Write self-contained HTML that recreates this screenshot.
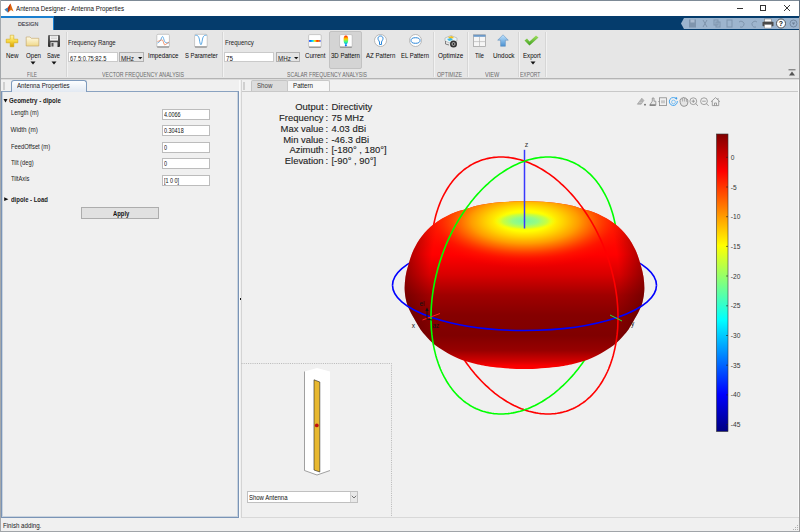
<!DOCTYPE html>
<html><head><meta charset="utf-8">
<style>
*{margin:0;padding:0;box-sizing:border-box}
html,body{width:800px;height:532px;overflow:hidden;background:#f0f0f0;font-family:"Liberation Sans",sans-serif;position:relative}
.a{position:absolute}
.t{position:absolute;white-space:nowrap;color:#000;line-height:1}
.lb{position:absolute;white-space:nowrap;color:#2b2b2b;font-size:6px;line-height:1}
.sec{position:absolute;white-space:nowrap;color:#7a7a7a;font-size:5.3px;line-height:1}
.sep{position:absolute;top:32px;width:1px;height:45px;background:#d6d6d6;box-shadow:1px 0 0 #f2f2f2}
.fld{position:absolute;background:#fff;border:1px solid #bcbcbc;font-size:5.6px;line-height:9px;padding-left:1px;color:#111;white-space:nowrap}
.plab{position:absolute;font-size:5.7px;color:#222;white-space:nowrap;line-height:1}
.ico{position:absolute;background:#fff;border:1px solid #9a9a9a;border-radius:1px}
.st{position:absolute;font-size:9.4px;color:#222;white-space:nowrap;line-height:1}
.cb{position:absolute;font-size:6.3px;color:#333;white-space:nowrap;line-height:1}
</style></head><body>
<!-- ===== title bar ===== -->
<div class="a" style="left:0;top:0;width:800px;height:16px;background:#fff;border-top:1px solid #7d8a96"></div>
<svg class="a" style="left:4px;top:3px" width="10" height="10" viewBox="0 0 10 10">
 <path d="M0.5,6.5 L4,4.5 L6.5,0.5 L9.5,8.5 L7,7 L4,9.5 Z" fill="#e06a10"/>
 <path d="M0.5,6.5 L4,4.5 L5,6.5 L4,9.5 Z" fill="#3a86c8"/>
 <path d="M4,4.5 L6.5,0.5 L6,5 L4,9.5 Z" fill="#b83010"/>
</svg>
<div class="t" style="left:15.75px;top:5.31px;font-size:7.2px;color:#111;transform:scaleX(0.864);transform-origin:0 0;">Antenna Designer - Antenna Properties</div>
<!-- window controls -->
<div class="a" style="left:737px;top:8px;width:6px;height:1px;background:#333"></div>
<div class="a" style="left:760px;top:5px;width:6px;height:6px;border:1px solid #333"></div>
<svg class="a" style="left:783px;top:4px" width="8" height="8" viewBox="0 0 8 8"><path d="M1,1 L7,7 M7,1 L1,7" stroke="#222" stroke-width="0.9"/></svg>
<!-- ===== blue band ===== -->
<div class="a" style="left:0;top:16px;width:800px;height:14px;background:#053c6c"></div>
<div class="a" style="left:1px;top:16px;width:53px;height:14px;background:#e6e6e6;border-top:2px solid #1a7fd0;border-right:1px solid #1a7fd0"></div>
<div class="t" style="left:17.60px;top:21.05px;font-size:6.2px;color:#3a3a48;-webkit-text-stroke:0.15px #3a3a48;transform:scaleX(0.855);transform-origin:0 0;">DESIGN</div>
<!-- quick access -->
<svg class="a" style="left:681px;top:18px" width="119" height="11" viewBox="0 0 119 11">
 <path d="M0,5.5 L3,0 L119,0 L119,11 L3,11 Z" fill="#9db5ce"/>
 <rect x="8" y="1.5" width="7" height="8" fill="#7f95ad"/><rect x="9.5" y="1.5" width="4" height="3" fill="#aabbd0"/>
 <path d="M22,2 L26,9 M26,2 L22,9" stroke="#7f95ad" stroke-width="1"/>
 <rect x="33" y="2" width="4" height="5" fill="none" stroke="#7f95ad"/><rect x="35" y="4" width="4" height="5" fill="none" stroke="#7f95ad"/>
 <rect x="46" y="2" width="5" height="7" fill="none" stroke="#7f95ad"/>
 <path d="M58,4 a3,3 0 1 1 1,5" fill="none" stroke="#7f95ad"/>
 <path d="M76,4 a3,3 0 1 0 -1,5" fill="none" stroke="#7f95ad"/>
 <rect x="83.5" y="1" width="7" height="3" fill="#fafafa" stroke="#666" stroke-width="0.5"/><rect x="81.5" y="3.8" width="11" height="4.5" rx="0.8" fill="#4a4a4a"/><rect x="83.5" y="6.5" width="7" height="3.5" fill="#fff" stroke="#777" stroke-width="0.4"/>
 <circle cx="100" cy="5.5" r="4.5" fill="#fff" stroke="#333" stroke-width="0.8"/>
 <text x="100" y="8" font-size="7" font-weight="bold" text-anchor="middle" fill="#111" font-family="Liberation Sans">?</text>
 <circle cx="112.5" cy="5.5" r="3.5" fill="none" stroke="#6b7f95" stroke-width="0.8"/><path d="M110.8,4.5 L114.2,4.5 L112.5,7 Z" fill="#6b7f95"/>
</svg>
<!-- ===== toolstrip ===== -->
<div class="a" style="left:0;top:30px;width:800px;height:48px;background:#e6e6e6"></div>
<div class="a" style="left:0;top:78px;width:800px;height:1px;background:#b4b4b4"></div>
<div class="a" style="left:0;top:79px;width:800px;height:1px;background:#dcdcdc"></div>
<div class="sep" style="left:66px"></div>
<div class="sep" style="left:222px"></div>
<div class="sep" style="left:433px"></div>
<div class="sep" style="left:467px"></div>
<div class="sep" style="left:518px"></div>
<div class="sep" style="left:545px"></div>
<!-- FILE -->
<svg class="a" style="left:0;top:30px" width="66" height="20" viewBox="0 30 66 20">
 <defs><linearGradient id="gy" x1="0" y1="0" x2="0" y2="1"><stop offset="0" stop-color="#fff6b0"/><stop offset="0.5" stop-color="#f8d840"/><stop offset="1" stop-color="#d8a000"/></linearGradient>
 <linearGradient id="gf" x1="0" y1="0" x2="0" y2="1"><stop offset="0" stop-color="#fffbe8"/><stop offset="1" stop-color="#f0d888"/></linearGradient>
 <linearGradient id="gd" x1="0" y1="0" x2="0" y2="1"><stop offset="0" stop-color="#6a6a6a"/><stop offset="1" stop-color="#2a2a2a"/></linearGradient></defs>
 <path d="M10.2,35.2 H13.8 V39.2 H17.8 V42.8 H13.8 V46.8 H10.2 V42.8 H6.2 V39.2 H10.2 Z" fill="url(#gy)" stroke="#d0a000" stroke-width="0.5"/>
 <path d="M26.2,37 H30 L31.3,38.3 H38.8 V46 H26.2 Z" fill="url(#gf)" stroke="#c0a060" stroke-width="0.6"/>
 <rect x="48" y="35" width="12" height="12" rx="1" fill="url(#gd)"/>
 <rect x="50" y="35.6" width="8" height="5" fill="#f4f4f4"/><path d="M51,37 H57 M51,38.5 H57" stroke="#bbb" stroke-width="0.5"/>
 <rect x="50.5" y="42.2" width="7" height="4.8" fill="#e0e0e0"/><rect x="51.5" y="43" width="2" height="3.5" fill="#555"/>
</svg>
<div class="t" style="left:6.00px;top:52.60px;font-size:6.5px;color:#0a0a0a;transform:scaleX(0.960);transform-origin:0 0;">New</div>
<div class="t" style="left:25.50px;top:52.60px;font-size:6.5px;color:#0a0a0a;transform:scaleX(0.943);transform-origin:0 0;">Open</div>
<div class="t" style="left:47.00px;top:52.60px;font-size:6.5px;color:#0a0a0a;transform:scaleX(0.877);transform-origin:0 0;">Save</div>
<svg class="a" style="left:30px;top:61px" width="6" height="4"><path d="M0.5,0.5 H5.5 L3,3.5Z" fill="#111"/></svg>
<svg class="a" style="left:51px;top:61px" width="6" height="4"><path d="M0.5,0.5 H5.5 L3,3.5Z" fill="#111"/></svg>
<div class="t" style="left:27.00px;top:71.73px;font-size:6.4px;color:#6a6a6a;transform:scaleX(0.741);transform-origin:0 0;">FILE</div>
<!-- VECTOR FREQ -->
<div class="t" style="left:68.10px;top:40.08px;font-size:6.4px;color:#222;transform:scaleX(0.939);transform-origin:0 0;">Frequency Range</div>
<div class="fld" style="left:67.5px;top:52px;width:50.5px;height:10px;border-color:#cacaca"></div>
<div class="t" style="left:69.60px;top:54.77px;font-size:7.0px;color:#1a1a1a;transform:scaleX(0.813);transform-origin:0 0;">67.5:0.75:82.5</div>
<div class="a" style="left:119.4px;top:52px;width:24.4px;height:10px;background:#e4e4e4;border:1px solid #b0b0b0"></div>
<div class="t" style="left:121.10px;top:54.77px;font-size:7.0px;color:#1a1a1a;transform:scaleX(0.903);transform-origin:0 0;">MHz</div>
<svg class="a" style="left:137.5px;top:56.5px" width="5" height="3"><path d="M0,0 H4.4 L2.2,2.2Z" fill="#111"/></svg>
<svg class="a" style="left:150px;top:30px" width="65" height="20" viewBox="150 30 65 20">
 <rect x="156.8" y="34.3" width="12.6" height="13" rx="1.2" fill="#fff" stroke="#b4b4b4" stroke-width="0.7"/>
 <path d="M157.2,46.9 H169" stroke="#707070" stroke-width="0.9"/>
 <path d="M157.5,43 C159.5,42 160.5,41 161.5,38 C162.2,36 163,36 163.6,38.5 C164.3,41 165,43 167,43 L169,42.8" fill="none" stroke="#4a9ee0" stroke-width="0.85"/>
 <path d="M157.5,41.5 C159.5,41 161,40 162,39.8 C163,40 163.5,42.5 164.3,44.6 C165,45.5 166,44 169,42" fill="none" stroke="#f08050" stroke-width="0.8"/>
 <rect x="194.6" y="34.3" width="12.6" height="13" rx="1.2" fill="#fff" stroke="#b4b4b4" stroke-width="0.7"/>
 <path d="M195,46.9 H206.8" stroke="#707070" stroke-width="0.9"/>
 <path d="M195.2,35.4 C197,35 198.5,35.5 199.3,39 C199.8,42 200.2,44.8 200.9,44.8 C201.6,44.8 202,42 202.5,39 C203.3,35.5 204.8,35 206.6,35.4" fill="none" stroke="#4a9ee0" stroke-width="0.9"/>
</svg>
<div class="t" style="left:148.00px;top:52.60px;font-size:6.5px;color:#0a0a0a;transform:scaleX(0.948);transform-origin:0 0;">Impedance</div>
<div class="t" style="left:184.50px;top:52.60px;font-size:6.5px;color:#0a0a0a;transform:scaleX(0.899);transform-origin:0 0;">S Parameter</div>
<div class="t" style="left:102.00px;top:71.73px;font-size:6.4px;color:#6a6a6a;transform:scaleX(0.816);transform-origin:0 0;">VECTOR FREQUENCY ANALYSIS</div>
<!-- SCALAR -->
<div class="t" style="left:224.50px;top:40.08px;font-size:6.4px;color:#222;transform:scaleX(0.954);transform-origin:0 0;">Frequency</div>
<div class="fld" style="left:224.25px;top:52px;width:50px;height:10px;border-color:#cacaca"></div>
<div class="t" style="left:225.80px;top:54.77px;font-size:7.0px;color:#1a1a1a;transform:scaleX(0.898);transform-origin:0 0;">75</div>
<div class="a" style="left:276.3px;top:52px;width:24.2px;height:10px;background:#e4e4e4;border:1px solid #b0b0b0"></div>
<div class="t" style="left:277.90px;top:54.77px;font-size:7.0px;color:#1a1a1a;transform:scaleX(0.889);transform-origin:0 0;">MHz</div>
<svg class="a" style="left:294.3px;top:56.5px" width="5" height="3"><path d="M0,0 H4.4 L2.2,2.2Z" fill="#111"/></svg>
<svg class="a" style="left:308px;top:34px" width="14" height="14" viewBox="0 0 14 14">
 <defs><linearGradient id="gj" x1="0" y1="0" x2="1" y2="0"><stop offset="0" stop-color="#0030ff"/><stop offset="0.3" stop-color="#00e0ff"/><stop offset="0.5" stop-color="#ffee00"/><stop offset="0.7" stop-color="#ff2000"/><stop offset="0.85" stop-color="#ff8000"/><stop offset="1" stop-color="#3050ff"/></linearGradient></defs>
 <rect x="0.6" y="0.6" width="12.6" height="12.8" rx="1.2" fill="#fff" stroke="#b4b4b4" stroke-width="0.7"/><path d="M1,13.1 H12.8" stroke="#707070" stroke-width="0.9"/>
 <rect x="1.2" y="6" width="11.4" height="1.9" fill="url(#gj)"/>
</svg>
<div class="a" style="left:329px;top:31px;width:33px;height:38px;background:#d4d4d4;border:1px solid #c2c2c2;border-radius:2px"></div>
<svg class="a" style="left:338.5px;top:34px" width="14" height="14" viewBox="0 0 14 14">
 <defs><linearGradient id="gv" x1="0" y1="0" x2="0" y2="1"><stop offset="0" stop-color="#ff2000"/><stop offset="0.3" stop-color="#ffd000"/><stop offset="0.55" stop-color="#40ff80"/><stop offset="0.8" stop-color="#00a0ff"/><stop offset="1" stop-color="#0020e0"/></linearGradient></defs>
 <rect x="0.6" y="0.6" width="12.6" height="12.8" rx="1.2" fill="#fff" stroke="#b4b4b4" stroke-width="0.7"/><path d="M1,13.1 H12.8" stroke="#707070" stroke-width="0.9"/>
 <path d="M6.9,1.6 C8.8,1.6 9.2,3.5 9.2,5.5 C9.2,8 8.8,9.5 7.6,10.3 L7.6,11.3 L8.3,11.3 L6.9,12.6 L5.5,11.3 L6.2,11.3 L6.2,10.3 C5,9.5 4.6,8 4.6,5.5 C4.6,3.5 5,1.6 6.9,1.6Z" fill="url(#gv)"/>
</svg>
<svg class="a" style="left:373.5px;top:34px" width="13" height="13" viewBox="0 0 13 13">
 <circle cx="6.5" cy="6.5" r="6" fill="#fff" stroke="#aaa" stroke-width="0.8"/>
 <path d="M6.5,2 C8.5,2 9,3.5 9,4.5 C9,6 8,6.5 7.5,8 L7.5,10.5 L5.5,10.5 L5.5,8 C5,6.5 4,6 4,4.5 C4,3.5 4.5,2 6.5,2Z" fill="none" stroke="#2a86d8" stroke-width="1"/>
</svg>
<svg class="a" style="left:408.5px;top:34px" width="13" height="13" viewBox="0 0 13 13">
 <circle cx="6.5" cy="6.5" r="6" fill="#fff" stroke="#aaa" stroke-width="0.8"/>
 <ellipse cx="6.5" cy="6.5" rx="4.5" ry="2.8" fill="none" stroke="#2a86d8" stroke-width="1"/>
</svg>
<div class="t" style="left:304.60px;top:52.60px;font-size:6.5px;color:#0a0a0a;transform:scaleX(0.945);transform-origin:0 0;">Current</div>
<div class="t" style="left:331.00px;top:52.60px;font-size:6.5px;color:#0a0a0a;transform:scaleX(0.933);transform-origin:0 0;">3D Pattern</div>
<div class="t" style="left:365.70px;top:52.60px;font-size:6.5px;color:#0a0a0a;transform:scaleX(0.943);transform-origin:0 0;">AZ Pattern</div>
<div class="t" style="left:401.00px;top:52.60px;font-size:6.5px;color:#0a0a0a;transform:scaleX(0.919);transform-origin:0 0;">EL Pattern</div>
<div class="t" style="left:286.60px;top:71.73px;font-size:6.4px;color:#6a6a6a;transform:scaleX(0.804);transform-origin:0 0;">SCALAR FREQUENCY ANALYSIS</div>
<!-- OPTIMIZE -->
<svg class="a" style="left:444px;top:34px" width="14" height="14" viewBox="0 0 14 14">
 <path d="M1,4 L7,1.5 L13,4 L13,7 L7,9.5 L1,7Z" fill="#e8f4f8" stroke="#999" stroke-width="0.5"/>
 <path d="M4,3 L8,2 L10,4 L6,5Z" fill="#f0c020"/><path d="M3,5 L7,4 L9,6 L5,7Z" fill="#40b8e0"/>
 <circle cx="9.5" cy="10" r="3.5" fill="#333"/><circle cx="9.5" cy="10" r="1.5" fill="none" stroke="#ddd" stroke-width="0.7"/>
 <path d="M1.5,7 L1.5,10 L5,11" fill="none" stroke="#555" stroke-width="0.7"/>
</svg>
<div class="t" style="left:437.50px;top:52.60px;font-size:6.5px;color:#0a0a0a;transform:scaleX(0.982);transform-origin:0 0;">Optimize</div>
<div class="t" style="left:437.20px;top:71.73px;font-size:6.4px;color:#6a6a6a;transform:scaleX(0.828);transform-origin:0 0;">OPTIMIZE</div>
<!-- VIEW -->
<svg class="a" style="left:473px;top:34px" width="13" height="13" viewBox="0 0 13 13">
 <rect x="0.5" y="0.8" width="12" height="11.7" fill="#f6f6f6" stroke="#9a9a9a" stroke-width="0.7"/>
 <rect x="0.5" y="0.8" width="12" height="2" fill="#6a98c8"/>
 <path d="M6.5,3 V12.3 M0.8,7.6 H12.2" stroke="#b8b8b8" stroke-width="0.7"/>
</svg>
<svg class="a" style="left:497px;top:34px" width="12" height="13" viewBox="0 0 12 13">
 <defs><linearGradient id="gb" x1="0" y1="0" x2="0" y2="1"><stop offset="0" stop-color="#c0e4ff"/><stop offset="1" stop-color="#4a90d0"/></linearGradient></defs>
 <path d="M6,0.8 L11.3,6.2 L8.4,6.2 L8.4,12.3 L3.6,12.3 L3.6,6.2 L0.7,6.2Z" fill="url(#gb)" stroke="#5a88b8" stroke-width="0.5"/>
</svg>
<div class="t" style="left:475.00px;top:52.60px;font-size:6.5px;color:#0a0a0a;transform:scaleX(0.879);transform-origin:0 0;">Tile</div>
<div class="t" style="left:492.50px;top:52.60px;font-size:6.5px;color:#0a0a0a;transform:scaleX(0.975);transform-origin:0 0;">Undock</div>
<div class="t" style="left:485.20px;top:71.73px;font-size:6.4px;color:#6a6a6a;transform:scaleX(0.875);transform-origin:0 0;">VIEW</div>
<!-- EXPORT -->
<svg class="a" style="left:524px;top:35px" width="15" height="11" viewBox="0 0 15 11">
 <defs><linearGradient id="gg" x1="0" y1="0" x2="0" y2="1"><stop offset="0" stop-color="#a0e060"/><stop offset="1" stop-color="#40a020"/></linearGradient></defs>
 <path d="M0.5,5.5 L3,3.5 L5.5,6.5 L12,0.5 L14.5,2.5 L5.5,10.5Z" fill="url(#gg)"/>
</svg>
<div class="t" style="left:523.00px;top:52.60px;font-size:6.5px;color:#0a0a0a;transform:scaleX(0.947);transform-origin:0 0;">Export</div>
<svg class="a" style="left:529.5px;top:61px" width="6" height="4"><path d="M0.5,0.5 H5.5 L3,3.5Z" fill="#111"/></svg>
<div class="t" style="left:520.40px;top:71.73px;font-size:6.4px;color:#6a6a6a;transform:scaleX(0.779);transform-origin:0 0;">EXPORT</div>
<svg class="a" style="left:788px;top:69px" width="8" height="7" viewBox="0 0 8 7"><path d="M0.5,0.8 H7.5" stroke="#555" stroke-width="0.9"/><path d="M1,6.5 L4,2.5 L7,6.5Z" fill="#555"/></svg>

<!-- ===== document tab strip ===== -->
<div class="a" style="left:3px;top:82px;width:2px;height:8px;background:#cfcfcf"></div>
<!-- left panel -->
<div class="a" style="left:1px;top:90.5px;width:238px;height:427px;border:1px solid #7a94b6;border-top-color:#8aa2c0;box-shadow:inset 1px 0 0 #c9d3de, inset -1px 0 0 #c9d3de, inset 0 -1px 0 #c9d3de;background:#f0f0f0"></div>
<div class="a" style="left:10.5px;top:79.8px;width:76.5px;height:11.9px;background:linear-gradient(#fdfeff,#e2e9f2);border:1px solid #7f9bbd;border-bottom:none;border-radius:3px 3px 0 0"></div>
<div class="t" style="left:17.45px;top:81.87px;font-size:7.0px;color:#1a1a1a;transform:scaleX(0.879);transform-origin:0 0;">Antenna Properties</div>
<div class="a" style="left:0;top:0;width:1px;height:532px;background:#a4a8ac"></div>
<svg class="a" style="left:0;top:95px" width="10" height="10" viewBox="0 95 10 10"><path d="M3.5,99 H7.5 L5.5,102.6Z" fill="#111"/></svg>
<div class="t" style="left:9.30px;top:98.27px;font-size:6.3px;color:#1a1a1a;font-weight:bold;transform:scaleX(0.969);transform-origin:0 0;">Geometry - dipole</div>
<div class="t" style="left:10.50px;top:110.27px;font-size:6.3px;color:#222;transform:scaleX(0.910);transform-origin:0 0;">Length (m)</div>
<div class="t" style="left:10.50px;top:126.57px;font-size:6.3px;color:#222;">Width (m)</div>
<div class="t" style="left:10.50px;top:143.87px;font-size:6.3px;color:#222;transform:scaleX(0.926);transform-origin:0 0;">FeedOffset (m)</div>
<div class="t" style="left:10.50px;top:159.97px;font-size:6.3px;color:#222;transform:scaleX(0.918);transform-origin:0 0;">Tilt (deg)</div>
<div class="t" style="left:10.50px;top:175.87px;font-size:6.3px;color:#222;transform:scaleX(0.912);transform-origin:0 0;">TiltAxis</div>
<div class="fld" style="left:162px;top:109px;width:48px;height:11px"></div>
<div class="t" style="left:163.60px;top:112.04px;font-size:6.8px;color:#111;transform:scaleX(0.800);transform-origin:0 0;">4.0066</div>
<div class="fld" style="left:162px;top:125px;width:48px;height:11px"></div>
<div class="t" style="left:163.60px;top:128.14px;font-size:6.8px;color:#111;transform:scaleX(0.800);transform-origin:0 0;">0.30418</div>
<div class="fld" style="left:162px;top:142px;width:48px;height:11px"></div>
<div class="t" style="left:163.60px;top:145.04px;font-size:6.8px;color:#111;transform:scaleX(0.800);transform-origin:0 0;">0</div>
<div class="fld" style="left:162px;top:158px;width:48px;height:11px"></div>
<div class="t" style="left:163.60px;top:161.04px;font-size:6.8px;color:#111;transform:scaleX(0.800);transform-origin:0 0;">0</div>
<div class="fld" style="left:162px;top:175px;width:48px;height:11px"></div>
<div class="t" style="left:163.60px;top:177.54px;font-size:6.8px;color:#111;transform:scaleX(0.800);transform-origin:0 0;">[1 0 0]</div>
<svg class="a" style="left:0;top:195px" width="10" height="10" viewBox="0 195 10 10"><path d="M4.2,197.3 V201.1 L8.4,199.2Z" fill="#111"/></svg>
<div class="t" style="left:10.70px;top:197.27px;font-size:6.3px;color:#1a1a1a;font-weight:bold;transform:scaleX(0.942);transform-origin:0 0;">dipole - Load</div>
<div class="a" style="left:81px;top:207px;width:78px;height:12px;background:#e1e1e1;border:1px solid #adadad"></div>
<div class="t" style="left:112.70px;top:210.57px;font-size:6.3px;color:#111;font-weight:bold;transform:scaleX(0.931);transform-origin:0 0;">Apply</div>

<!-- splitter -->
<div class="a" style="left:239px;top:80px;width:1px;height:438px;background:#fafafa"></div>
<div class="a" style="left:240.5px;top:80px;width:1.2px;height:438px;background:#d4d4d4"></div>
<div class="a" style="left:239.5px;top:298px;width:1.5px;height:1.5px;background:#111"></div>

<!-- ===== right document area ===== -->
<div class="a" style="left:243px;top:82px;width:2px;height:8px;background:#cfcfcf"></div>
<div class="a" style="left:250.5px;top:80px;width:37px;height:11px;background:#dcdcdc;border:1px solid #c4c4c4;border-bottom:none;border-radius:2px 2px 0 0"></div>
<div class="t" style="left:256.90px;top:82.17px;font-size:7.0px;color:#444;transform:scaleX(0.876);transform-origin:0 0;">Show</div>
<div class="a" style="left:287px;top:80px;width:43px;height:12px;background:#f7f7f7;border:1px solid #c8c8c8;border-bottom:none;border-radius:2px 2px 0 0"></div>
<div class="t" style="left:293.00px;top:82.17px;font-size:7.0px;color:#1a1a1a;transform:scaleX(0.886);transform-origin:0 0;">Pattern</div>
<div class="a" style="left:242px;top:91px;width:558px;height:1px;background:#c8c8c8"></div>

<!-- stats text -->
<div class="t" style="left:295.26px;top:101.70px;font-size:9.45px;color:#1e1e1e;-webkit-text-stroke:0.12px #1e1e1e;">Output</div>
<div class="t" style="left:279.01px;top:112.60px;font-size:9.45px;color:#1e1e1e;-webkit-text-stroke:0.12px #1e1e1e;">Frequency</div>
<div class="t" style="left:280.58px;top:123.50px;font-size:9.45px;color:#1e1e1e;-webkit-text-stroke:0.12px #1e1e1e;">Max value</div>
<div class="t" style="left:283.21px;top:134.50px;font-size:9.45px;color:#1e1e1e;-webkit-text-stroke:0.12px #1e1e1e;">Min value</div>
<div class="t" style="left:289.51px;top:145.40px;font-size:9.45px;color:#1e1e1e;-webkit-text-stroke:0.12px #1e1e1e;">Azimuth</div>
<div class="t" style="left:284.77px;top:156.40px;font-size:9.45px;color:#1e1e1e;-webkit-text-stroke:0.12px #1e1e1e;">Elevation</div>
<div class="t" style="left:325.60px;top:101.70px;font-size:9.45px;color:#1e1e1e;-webkit-text-stroke:0.12px #1e1e1e;">:</div>
<div class="t" style="left:325.60px;top:112.60px;font-size:9.45px;color:#1e1e1e;-webkit-text-stroke:0.12px #1e1e1e;">:</div>
<div class="t" style="left:325.60px;top:123.50px;font-size:9.45px;color:#1e1e1e;-webkit-text-stroke:0.12px #1e1e1e;">:</div>
<div class="t" style="left:325.60px;top:134.50px;font-size:9.45px;color:#1e1e1e;-webkit-text-stroke:0.12px #1e1e1e;">:</div>
<div class="t" style="left:325.60px;top:145.40px;font-size:9.45px;color:#1e1e1e;-webkit-text-stroke:0.12px #1e1e1e;">:</div>
<div class="t" style="left:325.60px;top:156.40px;font-size:9.45px;color:#1e1e1e;-webkit-text-stroke:0.12px #1e1e1e;">:</div>
<div class="t" style="left:331.40px;top:101.70px;font-size:9.45px;color:#1e1e1e;-webkit-text-stroke:0.12px #1e1e1e;">Directivity</div>
<div class="t" style="left:331.40px;top:112.60px;font-size:9.45px;color:#1e1e1e;-webkit-text-stroke:0.12px #1e1e1e;">75 MHz</div>
<div class="t" style="left:331.40px;top:123.50px;font-size:9.45px;color:#1e1e1e;-webkit-text-stroke:0.12px #1e1e1e;">4.03 dBi</div>
<div class="t" style="left:331.40px;top:134.50px;font-size:9.45px;color:#1e1e1e;-webkit-text-stroke:0.12px #1e1e1e;">-46.3 dBi</div>
<div class="t" style="left:331.40px;top:145.40px;font-size:9.45px;color:#1e1e1e;-webkit-text-stroke:0.12px #1e1e1e;">[-180&#176; , 180&#176;]</div>
<div class="t" style="left:331.40px;top:156.40px;font-size:9.45px;color:#1e1e1e;-webkit-text-stroke:0.12px #1e1e1e;">[-90&#176; , 90&#176;]</div>

<!-- figure toolbar -->
<svg class="a" style="left:634px;top:95px" width="90" height="14" viewBox="634 95 90 14" fill="none" stroke="#8c8c8c" stroke-width="0.8">
 <path d="M637.3,104.2 L641.8,98.2 L643.9,100.4 L641.2,104.2 Z" fill="#b4b4b4" stroke="#999" stroke-width="0.6"/>
 <path d="M639,102.5 L642.5,102.5" stroke="#d0d0d0" stroke-width="0.6"/>
 <circle cx="645" cy="104.7" r="0.9" fill="#666" stroke="none"/>
 <path d="M652.3,98 V101.2 L649.6,105.3 H655.8 V101.2 H654 V98 Z" fill="#e8e8e8" stroke="#8a8a8a"/><path d="M650,105 H655.5" stroke="#555" stroke-width="0.9"/>
 <rect x="659.5" y="97.8" width="7" height="7.8" stroke="#8a8a8a"/><rect x="661" y="100.3" width="4" height="3" fill="#c8c8c8" stroke="none"/><path d="M658.2,101.6 H659.5"/>
 <path d="M676.6,99.2 A4,4 0 1 0 677.3,101" stroke="#4aa8f0" stroke-width="1"/><circle cx="673.5" cy="102" r="1.9" fill="none" stroke="#6ab8f2" stroke-width="0.8"/><circle cx="676.3" cy="98.2" r="1" fill="#3a9ae8" stroke="none"/>
 <path d="M680.2,102.5 L680,100.5 Q680,99.3 681,99.5 L681.2,98.6 Q681.6,97.6 682.6,98 L683,97.7 Q684,97.2 684.6,97.9 L685.2,98 Q686.2,97.8 686.5,98.8 L686.8,99.3 Q687.8,99.3 687.8,100.5 V103 Q687.6,106 684.8,106.2 H683 Q680.8,106 680.2,102.5 Z" fill="#e4e4e4" stroke="#777" stroke-width="0.75"/>
 <path d="M682.6,98.2 V101.5 M684.6,98 V101.5 M686.6,99 V101.8" stroke="#888" stroke-width="0.6"/>
 <circle cx="693.3" cy="101.2" r="3.4"/><path d="M695.7,103.6 L698,105.9 M691.6,101.2 H695 M693.3,99.5 V102.9"/>
 <circle cx="704" cy="101.2" r="3.4"/><path d="M706.4,103.6 L708.7,105.9 M702.2,101.2 H705.8"/>
 <path d="M711,101.8 L715.5,97.6 L720,101.8 M712.3,100.8 V105.6 H718.7 V100.8 M714.5,105.6 V103 H716.5 V105.6 M718,98 V99.8"/>
</svg>
<!-- antenna view (lower left of figure) -->
<svg class="a" style="left:241px;top:360px" width="155" height="160" viewBox="241 360 155 160">
 <path d="M241.5,363.5 H391.5 V518" fill="none" stroke="#a8a8a8" stroke-width="0.8" stroke-dasharray="1,1.2"/>
 <path d="M304.5,371.5 L317,368 L330,371.5 L330,470.5 L317,475 L304.5,470.5 Z" fill="#fff"/>
 <path d="M304.5,371.5 L304.5,470.5 L317,475 L330,470.5" fill="none" stroke="#7a7a7a" stroke-width="0.7"/>
 <path d="M314,379.8 L319.8,382 L319.8,472 L314,470 Z" fill="#e8b830" stroke="#222" stroke-width="0.6"/>
 <circle cx="316.8" cy="425.4" r="1.9" fill="#c01010"/>
</svg>
<div class="a" style="left:247px;top:491px;width:111px;height:11.5px;background:#fff;border:1px solid #c0c0c0"></div>
<div class="a" style="left:350px;top:492px;width:7px;height:9.5px;background:#e8e8e8;border-left:1px solid #d0d0d0"></div>
<svg class="a" style="left:351px;top:494.5px" width="6" height="4"><path d="M0.8,0.8 L3,3 L5.2,0.8" fill="none" stroke="#555" stroke-width="0.8"/></svg>
<div class="t" style="left:248.50px;top:495.07px;font-size:6.3px;color:#111;transform:scaleX(0.948);transform-origin:0 0;">Show Antenna</div>

<!-- ===== 3D pattern ===== -->
<svg class="a" style="left:0;top:0" width="800" height="532" viewBox="0 0 800 532">
 <defs>
  <clipPath id="dc"><path d="M524.50,201.30 C516.33,201.30 507.42,201.68 500.00,202.30 C492.58,202.92 485.38,203.97 480.00,205.00 C474.62,206.03 472.53,207.00 467.70,208.50 C462.87,210.00 456.62,211.42 451.00,214.00 C445.38,216.58 438.83,220.33 434.00,224.00 C429.17,227.67 425.42,231.67 422.00,236.00 C418.58,240.33 415.75,245.25 413.50,250.00 C411.25,254.75 409.83,260.00 408.50,264.50 C407.17,269.00 406.13,272.75 405.50,277.00 C404.87,281.25 404.53,285.83 404.70,290.00 C404.87,294.17 405.62,298.50 406.50,302.00 C407.38,305.50 408.50,307.83 410.00,311.00 C411.50,314.17 413.75,317.92 415.50,321.00 C417.25,324.08 418.92,327.17 420.50,329.50 C422.08,331.83 423.50,333.25 425.00,335.00 C426.50,336.75 427.83,338.33 429.50,340.00 C431.17,341.67 432.83,343.33 435.00,345.00 C437.17,346.67 439.83,348.33 442.50,350.00 C445.17,351.67 447.75,353.33 451.00,355.00 C454.25,356.67 457.83,358.50 462.00,360.00 C466.17,361.50 470.83,362.83 476.00,364.00 C481.17,365.17 484.92,366.15 493.00,367.00 C501.08,367.85 514.00,369.10 524.50,369.10 C535.00,369.10 547.92,367.85 556.00,367.00 C564.08,366.15 567.83,365.17 573.00,364.00 C578.17,362.83 582.83,361.50 587.00,360.00 C591.17,358.50 594.75,356.67 598.00,355.00 C601.25,353.33 603.83,351.67 606.50,350.00 C609.17,348.33 611.83,346.67 614.00,345.00 C616.17,343.33 617.83,341.67 619.50,340.00 C621.17,338.33 622.50,336.75 624.00,335.00 C625.50,333.25 626.92,331.83 628.50,329.50 C630.08,327.17 631.75,324.08 633.50,321.00 C635.25,317.92 637.50,314.17 639.00,311.00 C640.50,307.83 641.62,305.50 642.50,302.00 C643.38,298.50 644.13,294.17 644.30,290.00 C644.47,285.83 644.13,281.25 643.50,277.00 C642.87,272.75 641.83,269.00 640.50,264.50 C639.17,260.00 637.75,254.75 635.50,250.00 C633.25,245.25 630.42,240.33 627.00,236.00 C623.58,231.67 619.83,227.67 615.00,224.00 C610.17,220.33 603.62,216.58 598.00,214.00 C592.38,211.42 586.13,210.00 581.30,208.50 C576.47,207.00 574.38,206.03 569.00,205.00 C563.62,203.97 556.42,202.92 549.00,202.30 C541.58,201.68 532.67,201.30 524.50,201.30Z"/></clipPath>
  <linearGradient id="body" x1="0" y1="201" x2="0" y2="369" gradientUnits="userSpaceOnUse">
   <stop offset="0" stop-color="#ff2000"/>
   <stop offset="0.32" stop-color="#ff0000"/>
   <stop offset="0.44" stop-color="#d80000"/>
   <stop offset="0.56" stop-color="#a00000"/>
   <stop offset="0.68" stop-color="#850000"/>
   <stop offset="0.8" stop-color="#800000"/>
   <stop offset="0.89" stop-color="#980000"/>
   <stop offset="0.95" stop-color="#d00000"/>
   <stop offset="0.98" stop-color="#f80000"/>
   <stop offset="1" stop-color="#ff0000"/>
  </linearGradient>
  <radialGradient id="topf" cx="525" cy="221" r="112" gradientUnits="userSpaceOnUse" gradientTransform="translate(525 221) scale(1 0.42) translate(-525 -221)">
   <stop offset="0" stop-color="#ffff00"/>
   <stop offset="0.22" stop-color="#ffff00"/>
   <stop offset="0.34" stop-color="#ffd400"/>
   <stop offset="0.48" stop-color="#ff9c00"/>
   <stop offset="0.62" stop-color="#ff5c00" stop-opacity="0.95"/>
   <stop offset="0.8" stop-color="#ff2000" stop-opacity="0.55"/>
   <stop offset="1" stop-color="#ff0000" stop-opacity="0"/>
  </radialGradient>
  <radialGradient id="hole" cx="525" cy="221" r="32" gradientUnits="userSpaceOnUse" gradientTransform="translate(525 221) scale(1 0.3) translate(-525 -221)">
   <stop offset="0" stop-color="#78f8a0"/>
   <stop offset="0.4" stop-color="#98fc80"/>
   <stop offset="0.7" stop-color="#c0ff48" stop-opacity="0.85"/>
   <stop offset="1" stop-color="#ffff00" stop-opacity="0"/>
  </radialGradient>
  <radialGradient id="side" cx="524.5" cy="290" r="125" gradientUnits="userSpaceOnUse" gradientTransform="translate(524.5 290) scale(1 1.6) translate(-524.5 -290)">
   <stop offset="0.76" stop-color="#500000" stop-opacity="0"/>
   <stop offset="1" stop-color="#500000" stop-opacity="0.62"/>
  </radialGradient>
 </defs>
 <!-- back halves -->
 <path d="M392.5,285.3 A132,45.2 0 0 1 656.5,285.3" fill="none" stroke="#0000ff" stroke-width="1.6"/>
 <path d="M548.0,414.0 L545.6,414.0 L543.2,413.8 L540.8,413.6 L538.4,413.3 L536.0,412.9 L533.6,412.4 L531.1,411.8 L528.7,411.2 L526.2,410.4 L523.8,409.6 L521.3,408.7 L518.9,407.7 L516.4,406.6 L514.0,405.5 L511.6,404.2 L509.2,402.9 L506.7,401.5 L504.4,400.0 L502.0,398.4 L499.6,396.8 L497.3,395.1 L494.9,393.3 L492.6,391.4 L490.3,389.5 L488.1,387.4 L485.8,385.4 L483.6,383.2 L481.4,381.0 L479.3,378.7 L477.1,376.4 L475.0,374.0 L473.0,371.5 L470.9,369.0 L469.0,366.4 L467.0,363.7 L465.1,361.0 L463.2,358.3 L461.4,355.5 L459.6,352.6 L457.9,349.8 L456.2,346.8 L454.5,343.8 L452.9,340.8 L451.4,337.8 L449.9,334.7 L448.4,331.6 L447.0,328.4 L445.7,325.2 L444.4,322.0 L443.2,318.8 L442.0,315.5 L440.9,312.2 L439.8,308.9 L438.8,305.6 L437.8,302.3 L437.0,298.9 L436.1,295.6 L435.4,292.2 L434.6,288.9 L434.0,285.5 L433.4,282.1 L432.9,278.8 L432.4,275.4 L432.0,272.1 L431.7,268.7 L431.4,265.4 L431.2,262.1 L431.1,258.8 L431.0,255.5 L431.0,252.2 L431.1,249.0 L431.2,245.8 L431.3,242.6 L431.6,239.4 L431.9,236.3 L432.3,233.2 L432.7,230.2 L433.2,227.2 L433.8,224.2 L434.4,221.3 L435.1,218.4 L435.8,215.5 L436.6,212.7 L437.5,210.0 L438.4,207.3 L439.4,204.6 L440.4,202.0 L441.5,199.5 L442.7,197.0 L443.9,194.6 L445.2,192.3 L446.5,190.0 L447.9,187.8 L449.3,185.6 L450.8,183.6 L452.3,181.5 L453.9,179.6 L455.5,177.7 L457.2,175.9 L458.9,174.2 L460.7,172.6 L462.5,171.0 L464.3,169.5 L466.2,168.1 L468.2,166.8 L470.1,165.5 L472.1,164.4 L474.2,163.3 L476.3,162.3 L478.4,161.4 L480.5,160.6 L482.7,159.8 L484.9,159.2 L487.1,158.6 L489.4,158.1 L491.7,157.7 L494.0,157.4 L496.3,157.2 L498.6,157.0 L501.0,157.0" fill="none" stroke="#ff0000" stroke-width="1.6"/>
 <path d="M501.0,414.0 L503.4,414.0 L505.8,413.8 L508.2,413.6 L510.6,413.3 L513.0,412.9 L515.4,412.4 L517.9,411.8 L520.3,411.2 L522.8,410.4 L525.2,409.6 L527.7,408.7 L530.1,407.7 L532.6,406.6 L535.0,405.5 L537.4,404.2 L539.8,402.9 L542.3,401.5 L544.6,400.0 L547.0,398.4 L549.4,396.8 L551.7,395.1 L554.1,393.3 L556.4,391.4 L558.7,389.5 L560.9,387.4 L563.2,385.4 L565.4,383.2 L567.6,381.0 L569.7,378.7 L571.9,376.4 L574.0,374.0 L576.0,371.5 L578.1,369.0 L580.0,366.4 L582.0,363.7 L583.9,361.0 L585.8,358.3 L587.6,355.5 L589.4,352.6 L591.1,349.8 L592.8,346.8 L594.5,343.8 L596.1,340.8 L597.6,337.8 L599.1,334.7 L600.6,331.6 L602.0,328.4 L603.3,325.2 L604.6,322.0 L605.8,318.8 L607.0,315.5 L608.1,312.2 L609.2,308.9 L610.2,305.6 L611.2,302.3 L612.0,298.9 L612.9,295.6 L613.6,292.2 L614.4,288.9 L615.0,285.5 L615.6,282.1 L616.1,278.8 L616.6,275.4 L617.0,272.1 L617.3,268.7 L617.6,265.4 L617.8,262.1 L617.9,258.8 L618.0,255.5 L618.0,252.2 L617.9,249.0 L617.8,245.8 L617.7,242.6 L617.4,239.4 L617.1,236.3 L616.7,233.2 L616.3,230.2 L615.8,227.2 L615.2,224.2 L614.6,221.3 L613.9,218.4 L613.2,215.5 L612.4,212.7 L611.5,210.0 L610.6,207.3 L609.6,204.6 L608.6,202.0 L607.5,199.5 L606.3,197.0 L605.1,194.6 L603.8,192.3 L602.5,190.0 L601.1,187.8 L599.7,185.6 L598.2,183.6 L596.7,181.5 L595.1,179.6 L593.5,177.7 L591.8,175.9 L590.1,174.2 L588.3,172.6 L586.5,171.0 L584.7,169.5 L582.8,168.1 L580.8,166.8 L578.9,165.5 L576.9,164.4 L574.8,163.3 L572.7,162.3 L570.6,161.4 L568.5,160.6 L566.3,159.8 L564.1,159.2 L561.9,158.6 L559.6,158.1 L557.3,157.7 L555.0,157.4 L552.7,157.2 L550.4,157.0 L548.0,157.0" fill="none" stroke="#00ff00" stroke-width="1.6"/>
 <!-- donut -->
 <g clip-path="url(#dc)">
  <rect x="400" y="195" width="250" height="180" fill="url(#body)"/>
  <rect x="400" y="195" width="250" height="180" fill="url(#side)"/>
  <rect x="400" y="195" width="250" height="180" fill="url(#topf)"/>
  <rect x="480" y="200" width="90" height="45" fill="url(#hole)"/>
 </g>
 <!-- z axis -->
 <path d="M524.5,149.8 V228.5" stroke="#3838ff" stroke-width="1.5"/>
 <text x="524.8" y="146.5" font-size="7" fill="#333" font-family="Liberation Sans">z</text>
 <!-- front halves -->
 <path d="M392.5,285.3 A132,45.2 0 0 0 656.5,285.3" fill="none" stroke="#0000ff" stroke-width="1.6"/>
 <path d="M501.0,157.0 L503.4,157.0 L505.8,157.2 L508.2,157.4 L510.6,157.7 L513.0,158.1 L515.4,158.6 L517.9,159.2 L520.3,159.8 L522.8,160.6 L525.2,161.4 L527.7,162.3 L530.1,163.3 L532.6,164.4 L535.0,165.5 L537.4,166.8 L539.8,168.1 L542.3,169.5 L544.6,171.0 L547.0,172.6 L549.4,174.2 L551.7,175.9 L554.1,177.7 L556.4,179.6 L558.7,181.5 L560.9,183.6 L563.2,185.6 L565.4,187.8 L567.6,190.0 L569.7,192.3 L571.9,194.6 L574.0,197.0 L576.0,199.5 L578.1,202.0 L580.0,204.6 L582.0,207.3 L583.9,210.0 L585.8,212.7 L587.6,215.5 L589.4,218.4 L591.1,221.2 L592.8,224.2 L594.5,227.2 L596.1,230.2 L597.6,233.2 L599.1,236.3 L600.6,239.4 L602.0,242.6 L603.3,245.8 L604.6,249.0 L605.8,252.2 L607.0,255.5 L608.1,258.8 L609.2,262.1 L610.2,265.4 L611.2,268.7 L612.0,272.1 L612.9,275.4 L613.6,278.8 L614.4,282.1 L615.0,285.5 L615.6,288.9 L616.1,292.2 L616.6,295.6 L617.0,298.9 L617.3,302.3 L617.6,305.6 L617.8,308.9 L617.9,312.2 L618.0,315.5 L618.0,318.8 L617.9,322.0 L617.8,325.2 L617.7,328.4 L617.4,331.6 L617.1,334.7 L616.7,337.8 L616.3,340.8 L615.8,343.8 L615.2,346.8 L614.6,349.8 L613.9,352.6 L613.2,355.5 L612.4,358.3 L611.5,361.0 L610.6,363.7 L609.6,366.4 L608.6,369.0 L607.5,371.5 L606.3,374.0 L605.1,376.4 L603.8,378.7 L602.5,381.0 L601.1,383.2 L599.7,385.4 L598.2,387.4 L596.7,389.5 L595.1,391.4 L593.5,393.3 L591.8,395.1 L590.1,396.8 L588.3,398.4 L586.5,400.0 L584.7,401.5 L582.8,402.9 L580.8,404.2 L578.9,405.5 L576.9,406.6 L574.8,407.7 L572.7,408.7 L570.6,409.6 L568.5,410.4 L566.3,411.2 L564.1,411.8 L561.9,412.4 L559.6,412.9 L557.3,413.3 L555.0,413.6 L552.7,413.8 L550.4,414.0 L548.0,414.0" fill="none" stroke="#ff0000" stroke-width="1.6"/>
 <path d="M548.0,157.0 L545.6,157.0 L543.2,157.2 L540.8,157.4 L538.4,157.7 L536.0,158.1 L533.6,158.6 L531.1,159.2 L528.7,159.8 L526.2,160.6 L523.8,161.4 L521.3,162.3 L518.9,163.3 L516.4,164.4 L514.0,165.5 L511.6,166.8 L509.2,168.1 L506.7,169.5 L504.4,171.0 L502.0,172.6 L499.6,174.2 L497.3,175.9 L494.9,177.7 L492.6,179.6 L490.3,181.5 L488.1,183.6 L485.8,185.6 L483.6,187.8 L481.4,190.0 L479.3,192.3 L477.1,194.6 L475.0,197.0 L473.0,199.5 L470.9,202.0 L469.0,204.6 L467.0,207.3 L465.1,210.0 L463.2,212.7 L461.4,215.5 L459.6,218.4 L457.9,221.2 L456.2,224.2 L454.5,227.2 L452.9,230.2 L451.4,233.2 L449.9,236.3 L448.4,239.4 L447.0,242.6 L445.7,245.8 L444.4,249.0 L443.2,252.2 L442.0,255.5 L440.9,258.8 L439.8,262.1 L438.8,265.4 L437.8,268.7 L437.0,272.1 L436.1,275.4 L435.4,278.8 L434.6,282.1 L434.0,285.5 L433.4,288.9 L432.9,292.2 L432.4,295.6 L432.0,298.9 L431.7,302.3 L431.4,305.6 L431.2,308.9 L431.1,312.2 L431.0,315.5 L431.0,318.8 L431.1,322.0 L431.2,325.2 L431.3,328.4 L431.6,331.6 L431.9,334.7 L432.3,337.8 L432.7,340.8 L433.2,343.8 L433.8,346.8 L434.4,349.8 L435.1,352.6 L435.8,355.5 L436.6,358.3 L437.5,361.0 L438.4,363.7 L439.4,366.4 L440.4,369.0 L441.5,371.5 L442.7,374.0 L443.9,376.4 L445.2,378.7 L446.5,381.0 L447.9,383.2 L449.3,385.4 L450.8,387.4 L452.3,389.5 L453.9,391.4 L455.5,393.3 L457.2,395.1 L458.9,396.8 L460.7,398.4 L462.5,400.0 L464.3,401.5 L466.2,402.9 L468.2,404.2 L470.1,405.5 L472.1,406.6 L474.2,407.7 L476.3,408.7 L478.4,409.6 L480.5,410.4 L482.7,411.2 L484.9,411.8 L487.1,412.4 L489.4,412.9 L491.7,413.3 L494.0,413.6 L496.3,413.8 L498.6,414.0 L501.0,414.0" fill="none" stroke="#00ff00" stroke-width="1.6"/>
 <!-- axes indicator -->
 <path d="M422.5,320 L440,313.5" stroke="#ff2020" stroke-width="1"/>
 <path d="M427,319 V310" stroke="#111" stroke-width="0.9"/><path d="M425.3,311 L427,307.5 L428.7,311Z" fill="#111"/>
 <path d="M427,319 L432,320" stroke="#111" stroke-width="0.9"/>
 <text x="419.5" y="306" font-size="6.5" fill="#111" font-family="Liberation Sans">el</text>
 <text x="411.8" y="327.5" font-size="6.5" fill="#111" font-family="Liberation Sans">x</text>
 <text x="432.5" y="327.5" font-size="6.5" fill="#111" font-family="Liberation Sans">az</text>
 <path d="M610,315 L622,321" stroke="#30e030" stroke-width="1"/>
 <text x="631" y="326" font-size="6.5" fill="#111" font-family="Liberation Sans">y</text>
 <!-- colorbar -->
 <defs>
  <linearGradient id="jet" x1="0" y1="0" x2="0" y2="1">
   <stop offset="0" stop-color="#800000"/>
   <stop offset="0.125" stop-color="#ff0000"/>
   <stop offset="0.375" stop-color="#ffff00"/>
   <stop offset="0.625" stop-color="#00ffff"/>
   <stop offset="0.875" stop-color="#0000ff"/>
   <stop offset="1" stop-color="#000080"/>
  </linearGradient>
 </defs>
 <rect x="716.5" y="134" width="11.5" height="297.5" fill="url(#jet)" stroke="#333" stroke-width="0.6"/>
 <g stroke="#222" stroke-width="0.6">
  <path d="M726,157.3 H728 M726,187 H728 M726,216.7 H728 M726,246.4 H728 M726,276 H728 M726,305.8 H728 M726,335.5 H728 M726,365.2 H728 M726,394.9 H728 M726,424.5 H728"/>
 </g>
 <g font-size="6.6" fill="#333" font-family="Liberation Sans">
  <text x="730.8" y="159.7">0</text>
  <text x="730.8" y="189.5">-5</text>
  <text x="730.8" y="219.2">-10</text>
  <text x="730.8" y="248.9">-15</text>
  <text x="730.8" y="278.6">-20</text>
  <text x="730.8" y="308.3">-25</text>
  <text x="730.8" y="338.0">-30</text>
  <text x="730.8" y="367.7">-35</text>
  <text x="730.8" y="397.4">-40</text>
  <text x="730.8" y="427.1">-45</text>
 </g>
</svg>

<!-- bottom bar -->
<div class="a" style="left:242px;top:517px;width:558px;height:1px;background:#d8d8d8"></div>
<div class="t" style="left:3.00px;top:522.84px;font-size:6.8px;color:#222;transform:scaleX(0.905);transform-origin:0 0;">Finish adding.</div>
<div class="a" style="left:0;top:531px;width:800px;height:1px;background:#a0a4a8"></div>
<div class="a" style="left:799px;top:0;width:1px;height:532px;background:#9c9c9c"></div>
<div class="a" style="left:799px;top:0;width:1px;height:17px;background:#5c6c7c"></div>
<div class="a" style="left:798px;top:80px;width:1px;height:437px;background:#fafafa"></div>
<svg class="a" style="left:792px;top:524px" width="7" height="7" viewBox="0 0 7 7" fill="#b0b0b0"><rect x="5" y="1" width="1" height="1"/><rect x="3" y="3" width="1" height="1"/><rect x="5" y="3" width="1" height="1"/><rect x="1" y="5" width="1" height="1"/><rect x="3" y="5" width="1" height="1"/><rect x="5" y="5" width="1" height="1"/></svg>
</body></html>
